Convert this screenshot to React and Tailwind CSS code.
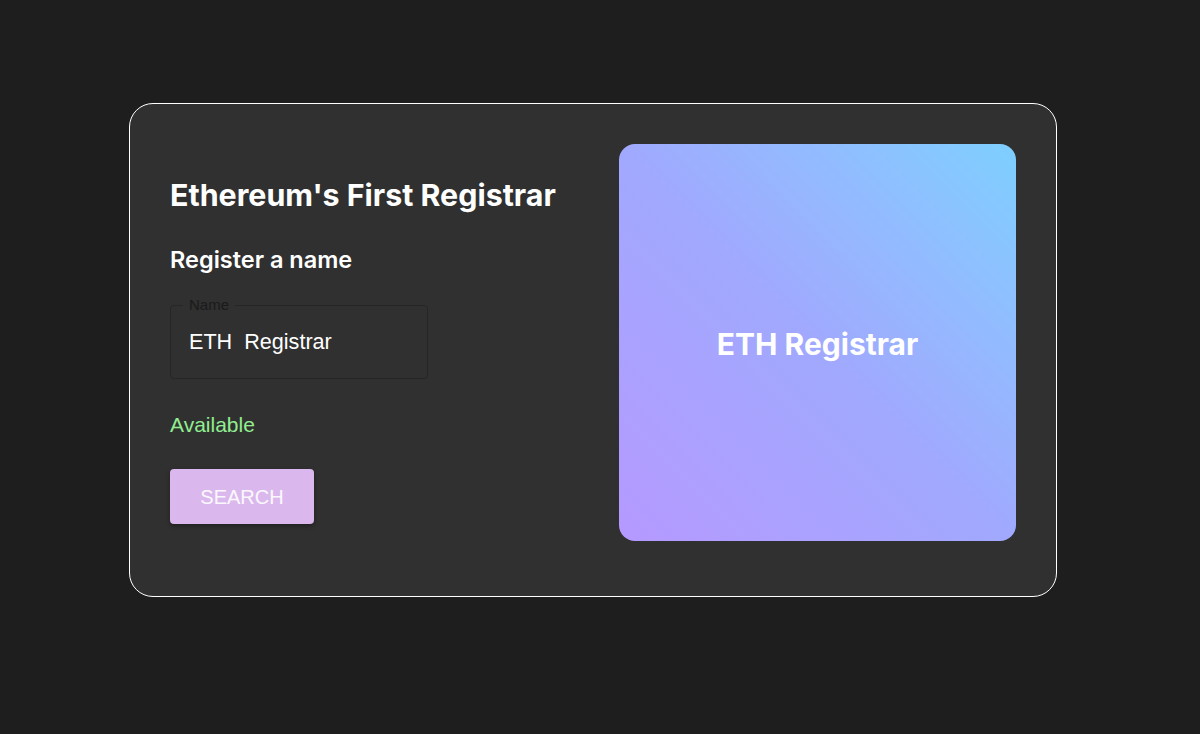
import React, { useState } from "react";

const App = () => {
  const [name, setName] = useState("ETH  Registrar");

  return (
    <div className="min-h-[734px] w-full bg-[#1e1e1e] pt-[103px] pl-[129px]">
      <div className="w-[928px] rounded-[24px] border border-white bg-[#303030] pl-[40px] pr-[40px] pt-[40px] pb-[55px] flex">
        <div className="flex-1 flex flex-col items-start">
          <h1 className="mt-[33px] text-[30.4px] leading-[36px] font-bold text-white font-['Inter',sans-serif]">
            Ethereum's First Registrar
          </h1>
          <h2 className="mt-[33px] text-[23.5px] leading-[28px] font-semibold text-white font-['Inter',sans-serif]">
            Register a name
          </h2>
          <fieldset className="mt-[26px] w-[258px] h-[79px] rounded-[4px] border border-[#262626] px-[12px] font-['Liberation_Sans',sans-serif]">
            <legend className="px-[6px] text-[15px] leading-[10px] text-[#1a1a1a]">Name</legend>
            <input
              value={name}
              onChange={(e) => setName(e.target.value)}
              className="w-full bg-transparent outline-none text-white text-[21.6px] leading-[24px] px-[6px] mt-[20px] whitespace-pre"
            />
          </fieldset>
          <p className="mt-[34px] text-[21px] leading-[24px] text-[#90ee90] font-['Liberation_Sans',sans-serif]">
            Available
          </p>
          <button className="mt-[32px] w-[144px] h-[55px] rounded-[4px] bg-[#dab8ed] text-[20px] text-white/90 font-['Liberation_Sans',sans-serif] shadow-[0_2px_4px_rgba(0,0,0,0.35)]">
            SEARCH
          </button>
        </div>
        <div className="w-[397px] h-[397px] rounded-[16px] bg-linear-to-tr from-[#b599ff] via-[#a0a9fe] to-[#7dcfff] flex items-center justify-center">
          <span className="mt-[4px] text-[30px] font-bold text-white font-['Inter',sans-serif]">
            ETH Registrar
          </span>
        </div>
      </div>
    </div>
  );
};

export default App;
